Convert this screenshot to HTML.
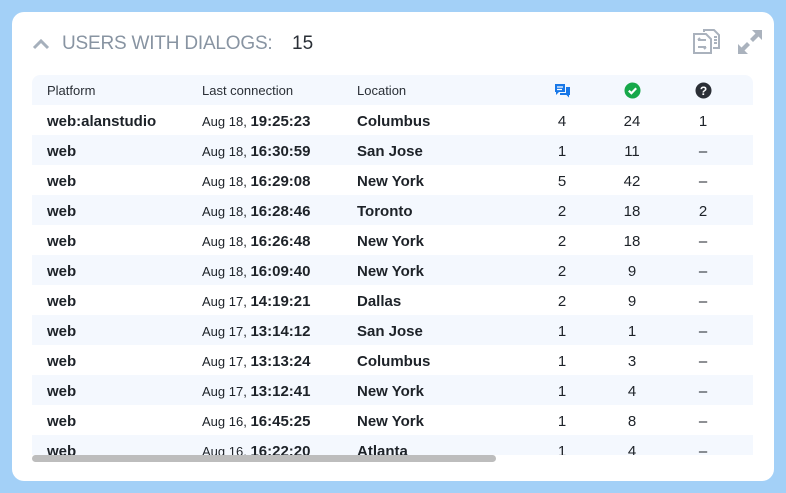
<!DOCTYPE html>
<html><head><meta charset="utf-8"><style>
*{margin:0;padding:0;box-sizing:border-box}
body{width:786px;height:493px;background:#a3d0f7;font-family:"Liberation Sans",sans-serif;position:relative;overflow:hidden}
.card{position:absolute;left:12px;top:12px;width:762px;height:469px;background:#fff;border-radius:12px}
.title{position:absolute;left:62px;top:33px;font-size:19px;color:#8894a2;letter-spacing:-0.2px}
.count{position:absolute;left:292px;top:33px;font-size:19px;color:#2a2f36}
.tbl{position:absolute;left:32px;top:75px;width:721px;height:380px;overflow:hidden}
.row{position:relative;height:30px;font-size:15px;color:#1d2228}
.row.alt{background:#f4f8fe}
.hdr{background:#f4f8fe;border-radius:8px 8px 0 0;font-size:13px;color:#2a2f36}
.row span{position:absolute;top:2px;line-height:30px;white-space:nowrap}
.c1{left:15px;font-weight:bold}
.c2{left:170px;font-size:13px}
.c2 b{font-size:15px}
.c3{left:325px;font-weight:bold}
.n{width:40px;text-align:center}
.n1{left:510px}.n2{left:580px}.n3{left:651px}
.hdr span{font-weight:normal;top:1px}
.sb{position:absolute;left:32px;top:455px;width:464px;height:7px;background:#bdbdbd;border-radius:4px}
</style></head><body>
<div class="card"></div>
<svg style="position:absolute;left:32px;top:38px" width="18" height="12" viewBox="0 0 18 12"><path d="M2 10 L9 3 L16 10" fill="none" stroke="#a6b0bc" stroke-width="3"/></svg>
<div class="title">USERS WITH DIALOGS:</div>
<div class="count">15</div>
<svg style="position:absolute;left:692px;top:28px" width="30" height="26" viewBox="0 0 30 26"><g fill="none" stroke="#aab2bd" stroke-width="2"><path d="M12 4 V2 H22 L27 7 V20 H21"/><path d="M2 6 H14 L19 11 V25 H2 Z" fill="#fff"/><path d="M6 12 H14 M6 12 L8 10 M14 19 H6 M14 19 L12 21"/><path d="M22 9 H25 M22 12 H25 M22 15 H25"/></g></svg>
<svg style="position:absolute;left:736px;top:28px" width="28" height="28" viewBox="0 0 28 28"><g fill="#aab2bd"><path d="M16 2 H26 V12 L22.5 8.5 L17 14 L14 11 L19.5 5.5 Z"/><path d="M12 26 H2 V16 L5.5 19.5 L11 14 L14 17 L8.5 22.5 Z"/></g></svg>
<div class="tbl">
<div class="row hdr"><span class="c1">Platform</span><span class="c2">Last connection</span><span class="c3">Location</span>
<svg style="position:absolute;left:522px;top:8px" width="17" height="15" viewBox="0 0 17 15"><path d="M1 1 H11 V9 H5 L2 12 V9 H1 Z" fill="#1878e8"/><path d="M12 4 H16 V12 H15 V14.5 L12.5 12 H6 V10 H12 Z" fill="#1878e8"/><path d="M3 4 H9 M3 6.5 H8" stroke="#fff" stroke-width="1.2"/></svg>
<svg style="position:absolute;left:592px;top:7px" width="17" height="17" viewBox="0 0 17 17"><circle cx="8.5" cy="8.5" r="8" fill="#17a84a"/><path d="M4.8 8.7 L7.4 11.2 L12.2 6.2" fill="none" stroke="#fff" stroke-width="2.2"/></svg>
<svg style="position:absolute;left:663px;top:7px" width="17" height="17" viewBox="0 0 17 17"><circle cx="8.5" cy="8.5" r="8" fill="#2b2f36"/><text x="8.5" y="13" font-size="12" font-weight="bold" fill="#fff" text-anchor="middle" font-family="Liberation Sans">?</text></svg>
</div>
<div class="row"><span class="c1">web:alanstudio</span><span class="c2">Aug 18, <b>19:25:23</b></span><span class="c3">Columbus</span><span class="n n1">4</span><span class="n n2">24</span><span class="n n3">1</span></div>
<div class="row alt"><span class="c1">web</span><span class="c2">Aug 18, <b>16:30:59</b></span><span class="c3">San Jose</span><span class="n n1">1</span><span class="n n2">11</span><span class="n n3">–</span></div>
<div class="row"><span class="c1">web</span><span class="c2">Aug 18, <b>16:29:08</b></span><span class="c3">New York</span><span class="n n1">5</span><span class="n n2">42</span><span class="n n3">–</span></div>
<div class="row alt"><span class="c1">web</span><span class="c2">Aug 18, <b>16:28:46</b></span><span class="c3">Toronto</span><span class="n n1">2</span><span class="n n2">18</span><span class="n n3">2</span></div>
<div class="row"><span class="c1">web</span><span class="c2">Aug 18, <b>16:26:48</b></span><span class="c3">New York</span><span class="n n1">2</span><span class="n n2">18</span><span class="n n3">–</span></div>
<div class="row alt"><span class="c1">web</span><span class="c2">Aug 18, <b>16:09:40</b></span><span class="c3">New York</span><span class="n n1">2</span><span class="n n2">9</span><span class="n n3">–</span></div>
<div class="row"><span class="c1">web</span><span class="c2">Aug 17, <b>14:19:21</b></span><span class="c3">Dallas</span><span class="n n1">2</span><span class="n n2">9</span><span class="n n3">–</span></div>
<div class="row alt"><span class="c1">web</span><span class="c2">Aug 17, <b>13:14:12</b></span><span class="c3">San Jose</span><span class="n n1">1</span><span class="n n2">1</span><span class="n n3">–</span></div>
<div class="row"><span class="c1">web</span><span class="c2">Aug 17, <b>13:13:24</b></span><span class="c3">Columbus</span><span class="n n1">1</span><span class="n n2">3</span><span class="n n3">–</span></div>
<div class="row alt"><span class="c1">web</span><span class="c2">Aug 17, <b>13:12:41</b></span><span class="c3">New York</span><span class="n n1">1</span><span class="n n2">4</span><span class="n n3">–</span></div>
<div class="row"><span class="c1">web</span><span class="c2">Aug 16, <b>16:45:25</b></span><span class="c3">New York</span><span class="n n1">1</span><span class="n n2">8</span><span class="n n3">–</span></div>
<div class="row alt"><span class="c1">web</span><span class="c2">Aug 16, <b>16:22:20</b></span><span class="c3">Atlanta</span><span class="n n1">1</span><span class="n n2">4</span><span class="n n3">–</span></div>
</div>
<div class="sb"></div>
</body></html>
